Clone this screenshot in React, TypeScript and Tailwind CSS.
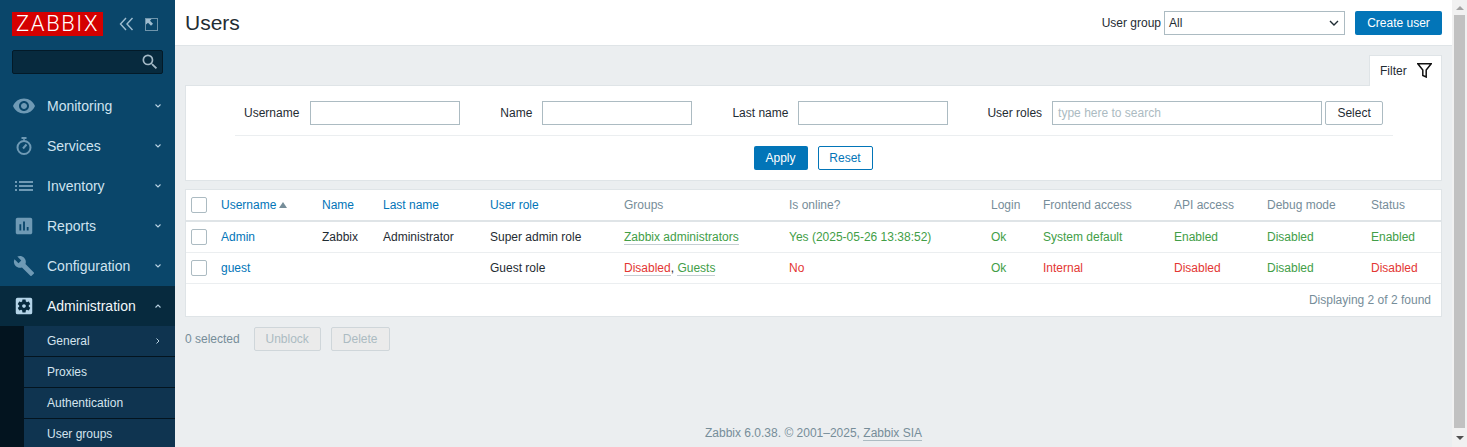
import { ReactNode } from 'react';
import { MdRemoveRedEye, MdAssessment, MdBuild, MdSettingsApplications, MdSearch } from 'react-icons/md';

const ListIcon = () => (
  <svg width="18" height="10" viewBox="0 0 18 10" fill="currentColor">
    <rect x="0" y="0" width="2" height="2" />
    <rect x="4" y="0" width="14" height="2" />
    <rect x="0" y="4" width="2" height="2" />
    <rect x="4" y="4" width="14" height="2" />
    <rect x="0" y="8" width="2" height="2" />
    <rect x="4" y="8" width="14" height="2" />
  </svg>
);

const StopwatchIcon = () => (
  <svg width="16" height="18" viewBox="0 0 16 18" fill="none" stroke="currentColor">
    <circle cx="8" cy="10.5" r="6.5" strokeWidth="2" />
    <path d="M5.5 1 H10.5" strokeWidth="2" />
    <path d="M8 1 V4" strokeWidth="1.5" />
    <path d="M7 11.5 L10.5 7.5" strokeWidth="2" />
  </svg>
);

const Chevron = ({ up }: { up?: boolean }) => (
  <svg width="6" height="4" viewBox="0 0 6 4" fill="none" stroke="currentColor" strokeWidth="1.1" className="text-[#b9d2e2]">
    <path d={up ? 'M0.5 3.5 L3 1 L5.5 3.5' : 'M0.5 0.5 L3 3 L5.5 0.5'} />
  </svg>
);

const menu: { label: string; icon: ReactNode }[] = [
  { label: 'Monitoring', icon: <MdRemoveRedEye size={24} /> },
  { label: 'Services', icon: <StopwatchIcon /> },
  { label: 'Inventory', icon: <ListIcon /> },
  { label: 'Reports', icon: <MdAssessment size={22} /> },
  { label: 'Configuration', icon: <MdBuild size={22} /> },
];

const subMenu = ['General', 'Proxies', 'Authentication', 'User groups'];

function Sidebar() {
  return (
    <aside className="w-[175px] h-[447px] shrink-0 overflow-hidden bg-[#0a466a] flex flex-col">
      <div className="flex items-center h-[38px] mt-3 mb-0 pl-3 pb-[14px] shrink-0">
        <div className="w-[91px] h-6 shrink-0 bg-[#d40000] flex items-center justify-center text-white text-[22px] leading-none tracking-[1.6px] font-light font-['Roboto',sans-serif]">
          ZABBIX
        </div>
        <svg width="15" height="14" viewBox="0 0 15 14" fill="none" stroke="#9fbdd0" strokeWidth="1.4" className="ml-[16px]">
          <path d="M7 1 L1.5 7 L7 13 M13.5 1 L8 7 L13.5 13" />
        </svg>
        <svg width="13" height="13" viewBox="0 0 13 13" className="ml-[11px]">
          <rect x="0.5" y="0.5" width="12" height="12" fill="none" stroke="#d5e4ee" strokeWidth="1" strokeDasharray="1 1" />
          <path d="M1 1 L6.5 1 L5 2.8 L8 5.8 L6 7.8 L3 4.8 L1 6.5 Z" fill="#9fbdd0" />
        </svg>
      </div>
      <div className="mx-3 h-6 shrink-0 bg-[#072a3e] border border-[#031a28] rounded-[2px] flex items-center justify-end pr-[2px]">
        <MdSearch size={20} className="text-[#a4b9c6]" />
      </div>
      <nav className="mt-3 flex flex-col">
        {menu.map((item) => (
          <div key={item.label} className="h-10 flex items-center text-[14px] text-[#cfe3f0]">
            <span className="w-[47px] pl-[12px] pr-[11px] flex justify-center text-[#6f9ab5]">{item.icon}</span>
            <span className="flex-1">{item.label}</span>
            <span className="pr-[14px] flex"><Chevron /></span>
          </div>
        ))}
        <div className="h-10 flex items-center text-[14px] text-[#f2f7fa] bg-[#072a3e]">
          <span className="w-[47px] pl-[12px] pr-[11px] flex justify-center text-[#b4d4e8]"><MdSettingsApplications size={22} /></span>
          <span className="flex-1">Administration</span>
          <span className="pr-[14px] flex"><Chevron up /></span>
        </div>
        <div className="bg-[#03141f] pl-6">
          {subMenu.map((item, i) => (
            <div key={item} className="h-[31px] bg-[#0f3450] border-b border-[#03141f] flex items-center pl-[23px] pr-[15px] text-[12px] text-[#d5e4ee]">
              <span className="flex-1">{item}</span>
              {i === 0 && (
                <svg width="4" height="6" viewBox="0 0 4 6" fill="none" stroke="#b9d2e2">
                  <path d="M0.5 0.5 L3 3 L0.5 5.5" />
                </svg>
              )}
            </div>
          ))}
        </div>
      </nav>
    </aside>
  );
}

function Field({ label, className, gap, children }: { label: string; className: string; gap: string; children: ReactNode }) {
  return (
    <div className={`flex items-center ${gap} ${className}`}>
      <label className="whitespace-nowrap">{label}</label>
      {children}
    </div>
  );
}

const textInput = 'h-6 w-[150px] bg-white border border-[#acbbc2] px-[5px] text-[12px]';

function FilterPanel() {
  return (
    <div className="bg-white border border-[#dfe4e7] h-[96px] flex flex-col">
      <div className="flex items-center h-[49px] pt-[4px] pl-[58px]">
        <Field label="Username" gap="gap-[11px]" className=""><div className={textInput} /></Field>
        <Field label="Name" gap="gap-[10px]" className="ml-10"><div className={textInput} /></Field>
        <Field label="Last name" gap="gap-[10px]" className="ml-10"><div className={textInput} /></Field>
        <Field label="User roles" gap="gap-[10px]" className="ml-[39px]">
          <div className="flex gap-[3px]">
            <div className="h-6 w-[270px] border border-[#acbbc2] px-[5px] flex items-center text-[#acbbc2]">type here to search</div>
            <button className="h-6 w-[58px] border border-[#acbbc2] rounded-[2px] text-[#1f2c33] bg-white">Select</button>
          </div>
        </Field>
      </div>
      <div className="ml-[49px] mr-[48px] border-t border-[#ebeef0]" />
      <div className="flex justify-center gap-[10px] mt-[10px] pr-[1px]">
        <button className="h-6 w-[54px] bg-[#0275b8] text-white rounded-[2px]">Apply</button>
        <button className="h-6 w-[55px] border border-[#0275b8] text-[#0275b8] bg-white rounded-[2px]">Reset</button>
      </div>
    </div>
  );
}

const Checkbox = () => <span className="block w-4 h-4 border border-[#acbbc2] rounded-[2px] bg-white" />;

const Hint = ({ color, children }: { color: string; children: ReactNode }) => (
  <span className={`${color} border-b border-[#c5ced3]`}>{children}</span>
);

function UsersTable() {
  const link = 'text-[#0275b8]';
  const muted = 'text-[#768d99]';
  const green = 'text-[#429e47]';
  const red = 'text-[#e33734]';
  return (
    <div className="bg-white border border-[#dfe4e7] mt-2">
      <table className="w-full table-fixed border-collapse">
        <colgroup>
          <col className="w-[29px]" /><col className="w-[101px]" /><col className="w-[61px]" /><col className="w-[107px]" />
          <col className="w-[134px]" /><col className="w-[165px]" /><col className="w-[202px]" /><col className="w-[52px]" />
          <col className="w-[131px]" /><col className="w-[93px]" /><col className="w-[104px]" /><col />
        </colgroup>
        <thead>
          <tr className="h-[31px] border-b-2 border-[#dfe4e7] text-left [&>th]:font-normal [&>th]:pl-[6px]">
            <th className="!pl-[5px]"><Checkbox /></th>
            <th className={link}>
              Username
              <span className="inline-block ml-[3px] align-[1px] w-0 h-0 border-x-[4px] border-x-transparent border-b-[6px] border-b-[#768d99]" />
            </th>
            <th className={link}>Name</th>
            <th className={link}>Last name</th>
            <th className={link}>User role</th>
            <th className={muted}>Groups</th>
            <th className={muted}>Is online?</th>
            <th className={muted}>Login</th>
            <th className={muted}>Frontend access</th>
            <th className={muted}>API access</th>
            <th className={muted}>Debug mode</th>
            <th className={muted}>Status</th>
          </tr>
        </thead>
        <tbody className="[&_td]:pl-[6px]">
          <tr className="h-[31px] border-b border-[#ebeef0]">
            <td className="!pl-[5px]"><Checkbox /></td>
            <td className={link}>Admin</td>
            <td>Zabbix</td>
            <td>Administrator</td>
            <td>Super admin role</td>
            <td><Hint color={green}>Zabbix administrators</Hint></td>
            <td className={green}>Yes (2025-05-26 13:38:52)</td>
            <td className={green}>Ok</td>
            <td className={green}>System default</td>
            <td className={green}>Enabled</td>
            <td className={green}>Disabled</td>
            <td className={green}>Enabled</td>
          </tr>
          <tr className="h-[31px] border-b border-[#ebeef0]">
            <td className="!pl-[5px]"><Checkbox /></td>
            <td className={link}>guest</td>
            <td />
            <td />
            <td>Guest role</td>
            <td><Hint color={red}>Disabled</Hint>, <Hint color={green}>Guests</Hint></td>
            <td className={red}>No</td>
            <td className={green}>Ok</td>
            <td className={red}>Internal</td>
            <td className={red}>Disabled</td>
            <td className={green}>Disabled</td>
            <td className={red}>Disabled</td>
          </tr>
        </tbody>
      </table>
      <div className="h-[32px] pt-[1px] flex items-center justify-end pr-[10px] text-[#768d99]">Displaying 2 of 2 found</div>
    </div>
  );
}

export default function App() {
  return (
    <div className="flex h-[447px] w-[1467px] overflow-hidden bg-[#ebeef0] text-[12px] text-[#1f2c33] font-['Liberation_Sans',Arial,sans-serif]">
      <Sidebar />
      <div className="flex-1 flex flex-col min-w-0">
        <header className="h-[46px] shrink-0 bg-white border-b border-[#dfe4e7] flex items-center pl-[10px] pr-[10px]">
          <h1 className="text-[21px] leading-none flex-1">Users</h1>
          <label className="mr-[3px]">User group</label>
          <div className="h-6 w-[181px] border border-[#acbbc2] flex items-center justify-between pl-[4px] pr-[5px]">
            <span>All</span>
            <svg width="10" height="6" viewBox="0 0 10 6" fill="none" stroke="#1f2c33" strokeWidth="1.4"><path d="M1 1 L5 5 L9 1" /></svg>
          </div>
          <button className="ml-[10px] h-6 w-[87px] bg-[#0275b8] text-white rounded-[2px]">Create user</button>
        </header>
        <main className="flex-1 flex flex-col px-[10px] pt-[9px]">
          <div className="flex justify-end">
            <div className="h-[31px] w-[73px] -mb-[1px] z-10 bg-white border-x border-t border-[#dfe4e7] flex items-center gap-[10px] pl-[10px]">
              <span>Filter</span>
              <svg width="15" height="15" viewBox="0 0 15 15" fill="none" stroke="#111" strokeWidth="1.5" className="-mt-[2px]"><path d="M0.8 0.8 H14.2 L9.2 7 V14 L5.8 12.5 V7 Z" /></svg>
            </div>
          </div>
          <FilterPanel />
          <UsersTable />
          <div className="flex items-center mt-[10px] text-[#768d99]">
            <span>0 selected</span>
            <button className="ml-[14px] h-6 w-[67px] border border-[#cfd6da] bg-[#ebebeb] text-[#acbbc2] rounded-[2px]">Unblock</button>
            <button className="ml-[10px] h-6 w-[59px] border border-[#cfd6da] bg-[#ebebeb] text-[#acbbc2] rounded-[2px]">Delete</button>
          </div>
          <footer className="mt-auto pb-[7px] text-center text-[#768d99] leading-[14px]">
            Zabbix 6.0.38. © 2001–2025, <span className="border-b border-[#acbbc2]">Zabbix SIA</span>
          </footer>
        </main>
      </div>
      <div className="w-[15px] shrink-0 bg-[#f1f1f1] flex flex-col">
        <div className="h-[15px] shrink-0 flex items-center justify-center">
          <span className="w-0 h-0 border-x-[4px] border-x-transparent border-b-[4px] border-b-[#a3a3a3]" />
        </div>
        <div className="h-[413px] ml-[2px] mr-[2px] bg-[#c1c1c1]" />
        <div className="flex-1 flex items-center justify-center">
          <span className="w-0 h-0 border-x-[4px] border-x-transparent border-t-[4px] border-t-[#505050]" />
        </div>
      </div>
    </div>
  );
}
